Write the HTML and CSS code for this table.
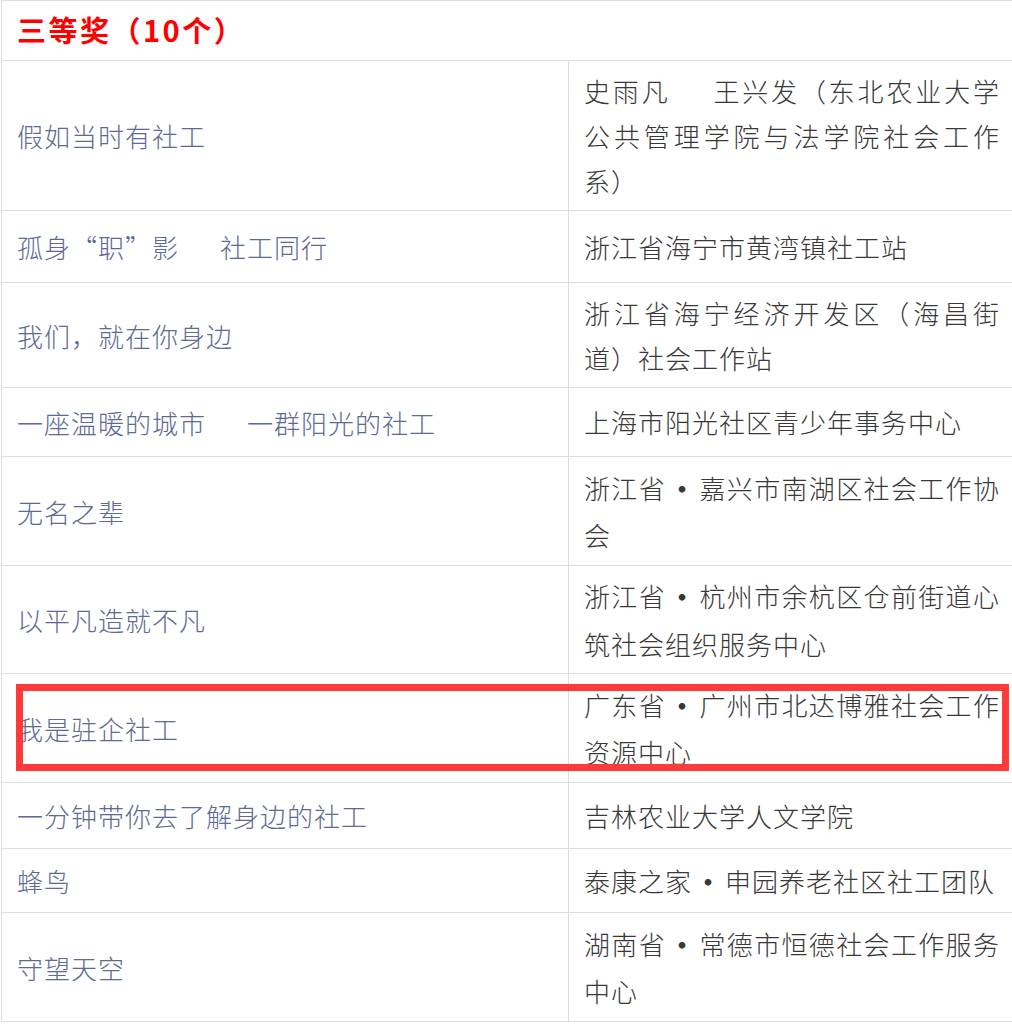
FILE: index.html
```html
<!DOCTYPE html>
<html lang="zh-CN">
<head>
  <meta charset="UTF-8" />
  <meta name="viewport" content="width=device-width, initial-scale=1.0"/>
  <title>三等奖</title>
  <link rel="stylesheet" href="styles.css">
</head>
<body>

  <div class="award-wrap">
    <table class="award-table">
      <colgroup>
        <col class="col-title">
        <col class="col-unit">
      </colgroup>
      <tr class="award-head">
        <td colspan="2">三等奖（10个）</td>
      </tr>
      <tr class="tight">
        <td class="work">假如当时有社工</td>
        <td class="unit">史雨凡&emsp;&ensp;王兴发（东北农业大学公共管理学院与法学院社会工作系）</td>
      </tr>
      <tr>
        <td class="work">孤身“职”影&emsp;&ensp;社工同行</td>
        <td class="unit">浙江省海宁市黄湾镇社工站</td>
      </tr>
      <tr class="tight">
        <td class="work">我们，就在你身边</td>
        <td class="unit">浙江省海宁经济开发区（海昌街道）社会工作站</td>
      </tr>
      <tr>
        <td class="work">一座温暖的城市&emsp;&ensp;一群阳光的社工</td>
        <td class="unit">上海市阳光社区青少年事务中心</td>
      </tr>
      <tr>
        <td class="work">无名之辈</td>
        <td class="unit">浙江省<span class="dot">•</span>嘉兴市南湖区社会工作协会</td>
      </tr>
      <tr>
        <td class="work">以平凡造就不凡</td>
        <td class="unit">浙江省<span class="dot">•</span>杭州市余杭区仓前街道心筑社会组织服务中心</td>
      </tr>
      <tr>
        <td class="work">我是驻企社工</td>
        <td class="unit">广东省<span class="dot">•</span>广州市北达博雅社会工作资源中心</td>
      </tr>
      <tr>
        <td class="work">一分钟带你去了解身边的社工</td>
        <td class="unit">吉林农业大学人文学院</td>
      </tr>
      <tr>
        <td class="work">蜂鸟</td>
        <td class="unit">泰康之家<span class="dot">•</span>申园养老社区社工团队</td>
      </tr>
      <tr>
        <td class="work">守望天空</td>
        <td class="unit">湖南省<span class="dot">•</span>常德市恒德社会工作服务中心</td>
      </tr>
    </table>

    <!-- highlight drawn over the 7th entry -->
    <div class="mark-box"></div>
  </div>

</body>
</html>
```

FILE: styles.css
```css
body {
  margin: 0;
  font-family: "Noto Sans CJK SC", sans-serif;
  background-color: #fff;
  overflow: hidden;
}

.award-wrap {
  position: relative;
  padding-left: 1px;
}

.award-table {
  border-collapse: collapse;
  table-layout: fixed;
  width: 1015px;
  font-size: 26px;
  letter-spacing: 1px;
  font-weight: 300;
}

.col-title {
  width: 567px;
}

.award-table td {
  border: 1px solid #dddddd;
  padding: 0 15px;
  vertical-align: middle;
}

.award-head td {
  color: #ff0000;
  font-weight: bold;
  font-size: 29px;
  letter-spacing: 2.5px;
  padding-bottom: 3px;
}

.work {
  color: #5c6a94;
  white-space: nowrap;
}

.unit {
  color: #383838;
  text-align: justify;
  line-height: 47.5px;
}

.tight .unit {
  line-height: 45px;
}

.dot {
  font-weight: bold;
  padding: 0 3px;
}

/* row heights */
.award-table tr:nth-child(1) { height: 60px; }
.award-table tr:nth-child(2) { height: 150px; }
.award-table tr:nth-child(3) { height: 72px; }
.award-table tr:nth-child(4) { height: 105px; }
.award-table tr:nth-child(5) { height: 69px; }
.award-table tr:nth-child(6) { height: 109px; }
.award-table tr:nth-child(7) { height: 108px; }
.award-table tr:nth-child(8) { height: 109px; }
.award-table tr:nth-child(9) { height: 66px; }
.award-table tr:nth-child(10) { height: 64px; }
.award-table tr:nth-child(11) { height: 109px; }

.mark-box {
  position: absolute;
  left: 16px;
  top: 684px;
  width: 979px;
  height: 73px;
  border: 7px solid #fe3a3a;
}
```
